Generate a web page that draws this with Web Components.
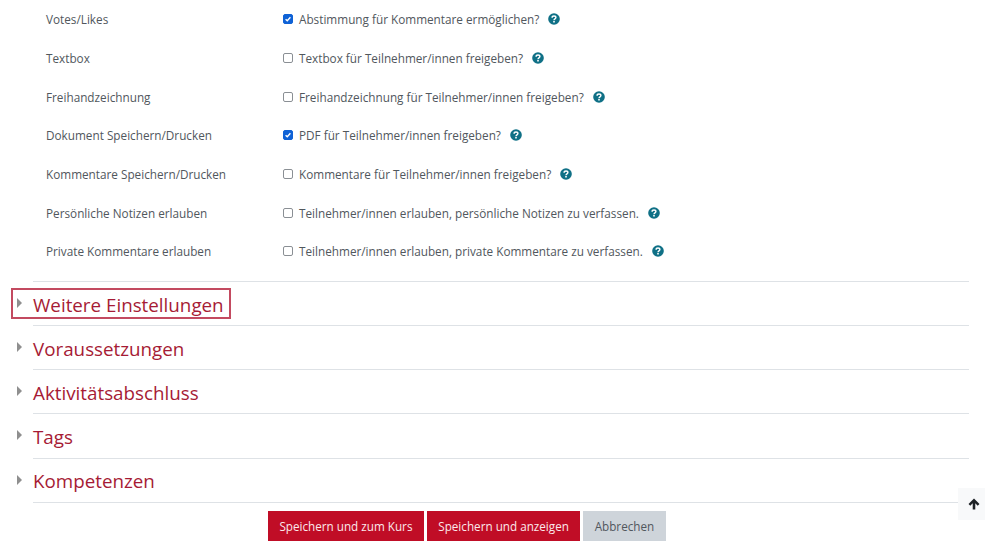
<!DOCTYPE html>
<html lang="de">
<head>
<meta charset="utf-8">
<title>Einstellungen</title>
<style>
  html, body { margin: 0; padding: 0; background: #fff; }
  body { font-family: "Open Sans", "Noto Sans", sans-serif; height: 552px; overflow: hidden; position: relative; }
</style>
</head>
<body>
<settings-form>
  <check-row label="Votes/Likes" checked>Abstimmung für Kommentare ermöglichen?</check-row>
  <check-row label="Textbox">Textbox für Teilnehmer/innen freigeben?</check-row>
  <check-row label="Freihandzeichnung">Freihandzeichnung für Teilnehmer/innen freigeben?</check-row>
  <check-row label="Dokument Speichern/Drucken" checked>PDF für Teilnehmer/innen freigeben?</check-row>
  <check-row label="Kommentare Speichern/Drucken">Kommentare für Teilnehmer/innen freigeben?</check-row>
  <check-row label="Persönliche Notizen erlauben">Teilnehmer/innen erlauben, persönliche Notizen zu verfassen.</check-row>
  <check-row label="Private Kommentare erlauben">Teilnehmer/innen erlauben, private Kommentare zu verfassen.</check-row>
  <section-head slot="sections" marked>Weitere Einstellungen</section-head>
  <section-head slot="sections">Voraussetzungen</section-head>
  <section-head slot="sections">Aktivitätsabschluss</section-head>
  <section-head slot="sections">Tags</section-head>
  <section-head slot="sections">Kompetenzen</section-head>
  <form-button slot="actions" primary>Speichern und zum Kurs</form-button>
  <form-button slot="actions" primary>Speichern und anzeigen</form-button>
  <form-button slot="actions">Abbrechen</form-button>
</settings-form>
<back-top></back-top>

<script>
class SettingsForm extends HTMLElement {
  constructor () {
    super()
    this.shadow = this.attachShadow({ mode: 'open' })
  }

  connectedCallback () {
    this.shadow.innerHTML = /*html*/ `
      <style>
        :host { display: block; }
        .rows { display: flex; flex-direction: column; }
        .sections {
          display: flex;
          flex-direction: column;
          margin: 10.1px 16px 0 33px;
          border-bottom: 1px solid #dee2e6;
        }
        .actions {
          display: flex;
          gap: 3px;
          padding: 8px 0 0 268px;
        }
      </style>
      <div class="rows"><slot></slot></div>
      <div class="sections"><slot name="sections"></slot></div>
      <div class="actions"><slot name="actions"></slot></div>
    `
  }
}

class CheckRow extends HTMLElement {
  constructor () {
    super()
    this.shadow = this.attachShadow({ mode: 'open' })
  }

  connectedCallback () {
    const checked = this.hasAttribute('checked')
    this.shadow.innerHTML = /*html*/ `
      <style>
        :host {
          display: flex;
          align-items: center;
          height: 38.7px;
          font-size: 11.75px;
          color: #51575d;
        }
        .label { width: 237px; margin-left: 46px; flex: none; }
        .box {
          box-sizing: border-box;
          width: 10px;
          height: 10px;
          margin-right: 6px;
          border-radius: 2px;
          border: 1px solid #8a8f94;
          background: #fff;
          flex: none;
          display: flex;
        }
        .box.on { background: #0f62d6; border-color: #0f62d6; }
        .text { white-space: nowrap; }
        help-icon { margin-left: 9px; }
      </style>
      <span class="label">${this.getAttribute('label')}</span>
      <span class="box ${checked ? 'on' : ''}">
        ${checked ? '<svg viewBox="0 0 10 10" width="8" height="8"><path d="M2 5.200 4.100 7.200 8 2.800" fill="none" stroke="#fff" stroke-width="1.700"/></svg>' : ''}
      </span>
      <span class="text"><slot></slot></span>
      <help-icon></help-icon>
    `
  }
}

class HelpIcon extends HTMLElement {
  constructor () {
    super()
    this.shadow = this.attachShadow({ mode: 'open' })
  }

  connectedCallback () {
    this.shadow.innerHTML = /*html*/ `
      <style>
        :host { display: inline-flex; width: 12px; height: 12px; flex: none; }
      </style>
      <svg viewBox="0 0 12 12" width="12" height="12">
        <circle cx="6" cy="6" r="5.800" fill="#0f7086"/>
        <path d="M4.100 4.700C4.100 3.600 5 3 6 3s1.900.6 1.900 1.600c0 1.300-1.900 1.300-1.900 2.600" fill="none" stroke="#fff" stroke-width="1.400"/>
        <rect x="5.200" y="8" width="1.600" height="1.500" fill="#fff"/>
      </svg>
    `
  }
}

class SectionHead extends HTMLElement {
  constructor () {
    super()
    this.shadow = this.attachShadow({ mode: 'open' })
  }

  connectedCallback () {
    this.shadow.innerHTML = /*html*/ `
      <style>
        :host {
          display: flex;
          position: relative;
          align-items: center;
          height: 44.2px;
          box-sizing: border-box;
          padding-top: 2px;
          border-top: 1px solid #dee2e6;
          color: #a61b35;
          font-size: 18.8px;
        }
        .arrow {
          position: absolute;
          left: -16px;
          top: 16px;
          width: 0;
          height: 0;
          border-left: 5.500px solid #8f8f8f;
          border-top: 5px solid transparent;
          border-bottom: 5px solid transparent;
        }
        :host([marked]) .mark {
          position: absolute;
          left: -22px;
          top: 6px;
          width: 216px;
          height: 27px;
          border: 2px solid #c34a60;
        }
      </style>
      <span class="arrow"></span>
      <span class="mark"></span>
      <span><slot></slot></span>
    `
  }
}

class FormButton extends HTMLElement {
  constructor () {
    super()
    this.shadow = this.attachShadow({ mode: 'open' })
  }

  connectedCallback () {
    this.shadow.innerHTML = /*html*/ `
      <style>
        :host {
          display: inline-flex;
          align-items: center;
          height: 30px;
          padding: 0 11.4px;
          font-size: 11.7px;
          background: #ced4da;
          color: #51575d;
          white-space: nowrap;
        }
        :host([primary]) { background: #c00d26; color: #fbe9ec; }
      </style>
      <slot></slot>
    `
  }
}

class BackTop extends HTMLElement {
  constructor () {
    super()
    this.shadow = this.attachShadow({ mode: 'open' })
  }

  connectedCallback () {
    this.shadow.innerHTML = /*html*/ `
      <style>
        :host {
          position: absolute;
          left: 958px;
          top: 488px;
          width: 32px;
          height: 32px;
          background: #f8f9fa;
          display: flex;
          align-items: center;
          justify-content: center;
        }
      </style>
      <svg viewBox="0 0 12 12" width="14" height="14">
        <path d="M6 1.300 1.300 6 2.800 7.500 4.900 5.400V10.800h2.200V5.400l2.100 2.100L10.700 6z" fill="#1d2125"/>
      </svg>
    `
  }
}

customElements.define('settings-form', SettingsForm)
customElements.define('check-row', CheckRow)
customElements.define('help-icon', HelpIcon)
customElements.define('section-head', SectionHead)
customElements.define('form-button', FormButton)
customElements.define('back-top', BackTop)
</script>
</body>
</html>
